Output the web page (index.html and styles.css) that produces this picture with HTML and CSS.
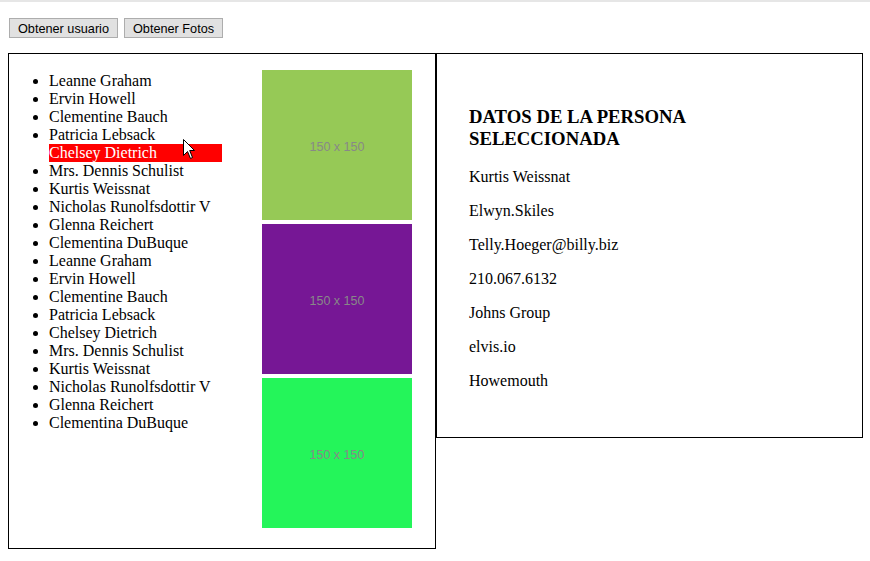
FILE: index.html
```html
<!DOCTYPE html>
<html lang="es">
<head>
    <meta charset="UTF-8">
    <meta name="viewport" content="width=device-width, initial-scale=1.0">
    <title>Usuarios y Fotos</title>
    <link rel="stylesheet" href="styles.css">
</head>
<body>
    <div class="topline"></div>
    <div class="toolbar">
        <button type="button">Obtener usuario</button>
        <button type="button">Obtener Fotos</button>
    </div>

    <div class="panels">
        <div class="panel left">
            <ul class="users">
                <li>Leanne Graham</li>
                <li>Ervin Howell</li>
                <li>Clementine Bauch</li>
                <li>Patricia Lebsack</li>
                <li class="selected">Chelsey Dietrich</li>
                <li>Mrs. Dennis Schulist</li>
                <li>Kurtis Weissnat</li>
                <li>Nicholas Runolfsdottir V</li>
                <li>Glenna Reichert</li>
                <li>Clementina DuBuque</li>
                <li>Leanne Graham</li>
                <li>Ervin Howell</li>
                <li>Clementine Bauch</li>
                <li>Patricia Lebsack</li>
                <li>Chelsey Dietrich</li>
                <li>Mrs. Dennis Schulist</li>
                <li>Kurtis Weissnat</li>
                <li>Nicholas Runolfsdottir V</li>
                <li>Glenna Reichert</li>
                <li>Clementina DuBuque</li>
            </ul>
            <ul class="photos">
                <li><span class="thumb green">150 x 150</span></li>
                <li><span class="thumb purple">150 x 150</span></li>
                <li><span class="thumb lime">150 x 150</span></li>
            </ul>
            <!-- mouse pointer that was on screen -->
            <svg class="pointer" width="13" height="21" viewBox="0 0 13 21">
                <path d="M0.5 0.5 L0.5 16.5 L4.5 12.5 L7.5 19.5 L9.5 18.5 L6.7 11.5 L11.5 11.5 Z" fill="#fff" stroke="#000" stroke-width="1"/>
            </svg>
        </div>

        <div class="panel right">
            <h3>DATOS DE LA PERSONA SELECCIONADA</h3>
            <p>Kurtis Weissnat</p>
            <p>Elwyn.Skiles</p>
            <p>Telly.Hoeger@billy.biz</p>
            <p>210.067.6132</p>
            <p>Johns Group</p>
            <p>elvis.io</p>
            <p>Howemouth</p>
        </div>
    </div>
</body>
</html>
```

FILE: styles.css
```css
body {
    margin: 0;
    font-family: "Liberation Serif", "Times New Roman", serif;
    font-size: 16px;
    color: #000;
    background: #fff;
}
.topline {
    height: 2px;
    background-color: #e6e6e6;
}
.toolbar {
    display: flex;
    gap: 6px;
    padding: 16px 9px 15px 9px;
}
button {
    font-family: "Liberation Sans", Arial, sans-serif;
    font-size: 12.7px;
    height: 20px;
    line-height: 16px;
    padding: 2px 8px 0 8px;
    border: 1px solid #adadad;
    background-color: #e1e1e1;
    color: #000;
    border-radius: 0;
}
.panels {
    display: flex;
    padding: 0 7px 0 8px;
    align-items: flex-start;
}
.panel {
    box-sizing: border-box;
    border: 1px solid #000;
}
.left {
    flex: 0 0 428px;
    display: flex;
    position: relative;
}
.users,
.photos {
    width: 50%;
    margin: 16px 0;
    padding-left: 40px;
    box-sizing: border-box;
}
.users {
    padding-top: 2px;
}
.users li {
    line-height: 18px;
}
.users li.selected {
    list-style: none;
    background-color: red;
    color: #fff;
}
.photos {
    list-style: none;
}
.photos li {
    margin-bottom: 4px;
}
.thumb {
    display: flex;
    width: 150px;
    height: 150px;
    box-sizing: border-box;
    padding-top: 3px;
    align-items: center;
    justify-content: center;
    font-family: "Liberation Sans", Arial, sans-serif;
    font-size: 12.5px;
    color: #888;
}
.green {
    background-color: #96c956;
}
.purple {
    background-color: #761795;
}
.lime {
    background-color: #24f55a;
}
.pointer {
    position: absolute;
    left: 174px;
    top: 85px;
}
.right {
    flex: 0 0 427px;
    padding: 34px 32px 31px 32px;
}
.right h3 {
    font-size: 18.72px;
    margin: 18px 0;
    max-width: 300px;
    line-height: 22px;
}
.right p {
    margin: 16px 0;
    line-height: 18px;
}
```
